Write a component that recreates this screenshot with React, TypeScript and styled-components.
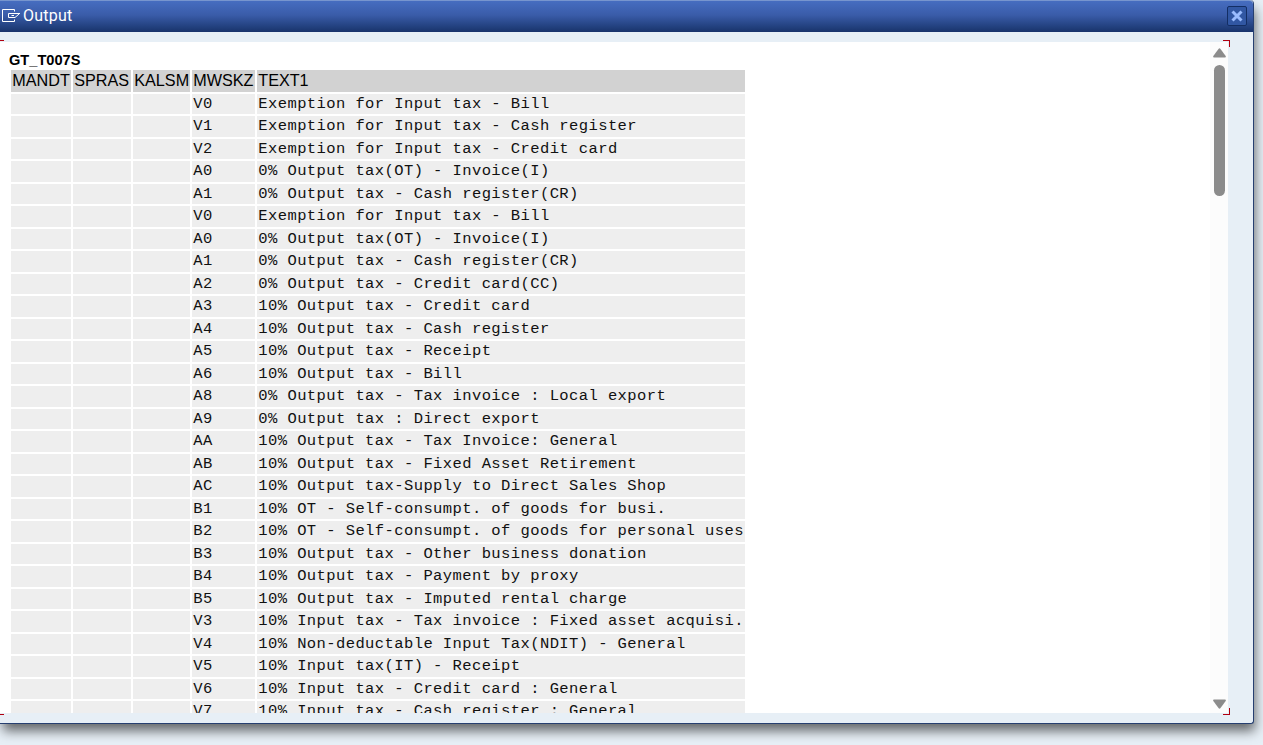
import React from 'react';
import styled, { createGlobalStyle } from 'styled-components';

const Global = createGlobalStyle`
  * { box-sizing: border-box; }
  html, body { margin: 0; overflow: hidden; }
  body { background: #e7eff6; font-family: "Liberation Sans", Arial, sans-serif; color: #000; }
`;
const Desktop = styled.div`
  width: 1263px; height: 745px; overflow: hidden; background: #e7eff6;
`;
const Dialog = styled.section`
  position: relative;
  display: flex; flex-direction: column;
  width: 1254px; height: 724px;
  background: #e7eff6;
  border-right: 1px solid #263f70; border-bottom: 1px solid #263f70;
  border-radius: 0 4px 3px 0;
  box-shadow: 2px 8px 12px -1px rgba(0, 0, 0, .57);
`;
const TitleBar = styled.header`
  display: flex; align-items: center; justify-content: space-between;
  height: 32px; flex: none; padding: 0 6px 2px 2px;
  border-top: 1px solid #7795ce; border-radius: 0 4px 0 0;
  background: linear-gradient(#466dc0, #3a5ca9 45%, #213f7c 85%, #19336b);
`;
const Title = styled.h1`
  display: flex; align-items: center; gap: 3px;
  margin: 0; font: 400 16px Roboto, sans-serif; color: #fff;
`;
const TitleIcon = styled.svg`
  display: block; flex: none; margin-top: -1px;
`;
const TitleText = styled.span`
  letter-spacing: .25px;
`;
const Close = styled.button`
  display: grid; place-items: center; width: 20px; height: 20px; padding: 0;
  border: 1px solid #132e64; border-radius: 2px; background: #3157a3;
`;
const Frame = styled.main`
  display: flex; width: 1228px; height: 671px; margin-top: 10px; background: #fff;
`;
const Content = styled.div`
  flex: 1; min-width: 0; padding: 9px 0 0 9px; overflow: hidden;
`;
const Name = styled.h2`
  margin: 0; height: 19px; font-size: 14.6px; line-height: 19px; font-weight: 700;
`;
const Table = styled.div`
  display: flex; flex-direction: column; gap: 2px; margin-left: 2px;
`;
const Row = styled.div<{ $head?: boolean }>`
  display: grid; grid-template-columns: 60px 58px 57px 63px 488px; column-gap: 2px;
  flex: none; height: ${p => (p.$head ? 21.75 : 20.5)}px;
`;
const HeadCell = styled.div`
  padding-left: 1.25px; overflow: hidden; background: #d2d2d2;
  font-size: 16.2px; line-height: 21px; white-space: nowrap;
`;
const Cell = styled.div`
  padding-left: 1.3px; background: #eee; white-space: pre; color: #111;
  font: 15.5px/20.5px "Liberation Mono", monospace; letter-spacing: .41px;
`;
const ScrollBar = styled.div`
  display: flex; flex-direction: column; align-items: center; width: 18px;
  padding: 6px 0 4px; background: #fcfcfc;
`;
const Thumb = styled.div`
  width: 11px; height: 131px; margin: 7px 0 auto; border-radius: 6px; background: #8b8b8b;
`;
const Corner = styled.i<{ $bottom?: boolean; $left?: boolean }>`
  position: absolute;
  ${p => (p.$left ? 'left: 0; width: 4px;' : 'left: 1223px; width: 7px; border-right: 1px solid #b00010;')}
  ${p => (p.$bottom ? 'bottom: 8px; border-bottom: 1px solid #b00010;' : 'top: 40px; border-top: 1px solid #b00010;')}
  height: 7px;
`;

const rows = [
  ['V0', 'Exemption for Input tax - Bill'],
  ['V1', 'Exemption for Input tax - Cash register'],
  ['V2', 'Exemption for Input tax - Credit card'],
  ['A0', '0% Output tax(OT) - Invoice(I)'],
  ['A1', '0% Output tax - Cash register(CR)'],
  ['V0', 'Exemption for Input tax - Bill'],
  ['A0', '0% Output tax(OT) - Invoice(I)'],
  ['A1', '0% Output tax - Cash register(CR)'],
  ['A2', '0% Output tax - Credit card(CC)'],
  ['A3', '10% Output tax - Credit card'],
  ['A4', '10% Output tax - Cash register'],
  ['A5', '10% Output tax - Receipt'],
  ['A6', '10% Output tax - Bill'],
  ['A8', '0% Output tax - Tax invoice : Local export'],
  ['A9', '0% Output tax : Direct export'],
  ['AA', '10% Output tax - Tax Invoice: General'],
  ['AB', '10% Output tax - Fixed Asset Retirement'],
  ['AC', '10% Output tax-Supply to Direct Sales Shop'],
  ['B1', '10% OT - Self-consumpt. of goods for busi.'],
  ['B2', '10% OT - Self-consumpt. of goods for personal uses'],
  ['B3', '10% Output tax - Other business donation'],
  ['B4', '10% Output tax - Payment by proxy'],
  ['B5', '10% Output tax - Imputed rental charge'],
  ['V3', '10% Input tax - Tax invoice : Fixed asset acquisi.'],
  ['V4', '10% Non-deductable Input Tax(NDIT) - General'],
  ['V5', '10% Input tax(IT) - Receipt'],
  ['V6', '10% Input tax - Credit card : General'],
  ['V7', '10% Input tax - Cash register : General'],
];

export default function App() {
  return (
    <Desktop>
      <Global />
      <Dialog>
        <TitleBar>
          <Title>
            <TitleIcon width="18" height="13" viewBox="0 0 18 13" fill="none" stroke="#fff">
              <path d="M12.500 2.500V.5H.5v12h12v-2" />
              <path d="M18 4.500H6.500v4H13l4-3.500M9.500 6.500H12" />
            </TitleIcon>
            <TitleText>Output</TitleText>
          </Title>
          <Close aria-label="Close">
            <svg width="12" height="12" viewBox="0 0 12 12" strokeWidth="3">
              <path d="M1.500 1.500l9 9M10.500 1.500l-9 9" stroke="#9abcff" />
            </svg>
          </Close>
        </TitleBar>
        <Frame>
          <Content>
            <Name>GT_T007S</Name>
            <Table>
              <Row $head>
                {['MANDT', 'SPRAS', 'KALSM', 'MWSKZ', 'TEXT1'].map(h => <HeadCell key={h}>{h}</HeadCell>)}
              </Row>
              {rows.map(([code, text], i) => (
                <Row key={i}>
                  <Cell /><Cell /><Cell /><Cell>{code}</Cell><Cell>{text}</Cell>
                </Row>
              ))}
            </Table>
          </Content>
          <ScrollBar>
            <svg width="13" height="10" viewBox="0 0 13 10" fill="#8b8b8b"><path d="M5.500.9q1-1.200 2 0L12.700 8q.6 1.600-.7 1.600H1Q-.3 9.600.3 8z" /></svg>
            <Thumb />
            <svg width="13" height="10" viewBox="0 0 13 10" fill="#8b8b8b"><path d="M5.500 9.100q1 1.200 2 0L12.700 2q.6-1.600-.7-1.600H1Q-.3.400.3 2z" /></svg>
          </ScrollBar>
        </Frame>
        <Corner $left /><Corner /><Corner $left $bottom /><Corner $bottom />
      </Dialog>
    </Desktop>
  );
}
